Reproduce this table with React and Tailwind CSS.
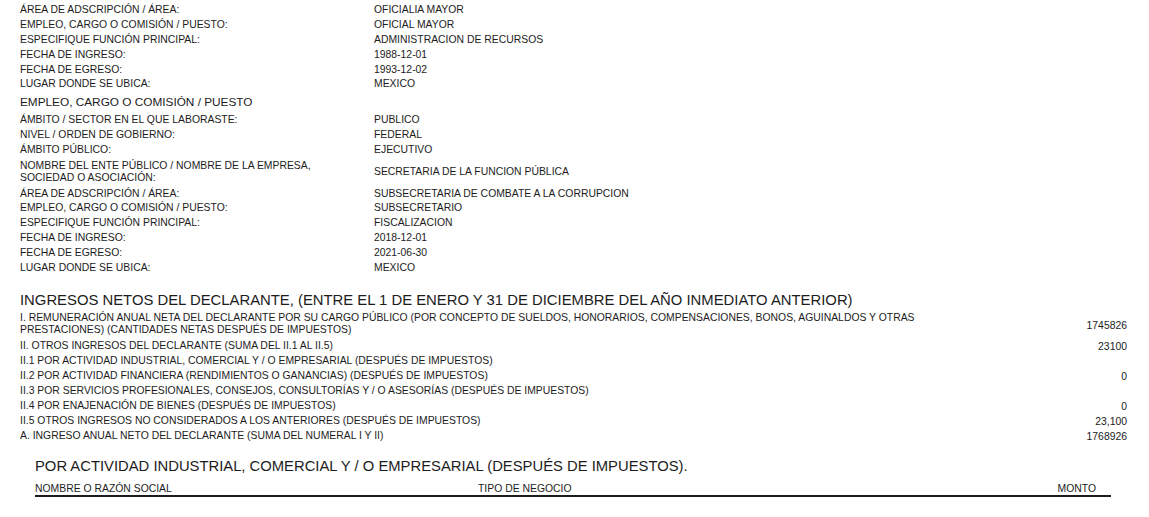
import React from "react";

const sec1 = [
  ["ÁREA DE ADSCRIPCIÓN / ÁREA:", "OFICIALIA MAYOR"],
  ["EMPLEO, CARGO O COMISIÓN / PUESTO:", "OFICIAL MAYOR"],
  ["ESPECIFIQUE FUNCIÓN PRINCIPAL:", "ADMINISTRACION DE RECURSOS"],
  ["FECHA DE INGRESO:", "1988-12-01"],
  ["FECHA DE EGRESO:", "1993-12-02"],
  ["LUGAR DONDE SE UBICA:", "MEXICO"],
];

const sec2a = [
  ["ÁMBITO / SECTOR EN EL QUE LABORASTE:", "PUBLICO"],
  ["NIVEL / ORDEN DE GOBIERNO:", "FEDERAL"],
  ["ÁMBITO PÚBLICO:", "EJECUTIVO"],
];
const sec2b = [
  ["ÁREA DE ADSCRIPCIÓN / ÁREA:", "SUBSECRETARIA DE COMBATE A LA CORRUPCION"],
  ["EMPLEO, CARGO O COMISIÓN / PUESTO:", "SUBSECRETARIO"],
  ["ESPECIFIQUE FUNCIÓN PRINCIPAL:", "FISCALIZACION"],
  ["FECHA DE INGRESO:", "2018-12-01"],
  ["FECHA DE EGRESO:", "2021-06-30"],
  ["LUGAR DONDE SE UBICA:", "MEXICO"],
];

const ingresos = [
  ["II. OTROS INGRESOS DEL DECLARANTE (SUMA DEL II.1 AL II.5)", "23100"],
  ["II.1 POR ACTIVIDAD INDUSTRIAL, COMERCIAL Y / O EMPRESARIAL (DESPUÉS DE IMPUESTOS)", ""],
  ["II.2 POR ACTIVIDAD FINANCIERA (RENDIMIENTOS O GANANCIAS) (DESPUÉS DE IMPUESTOS)", "0"],
  ["II.3 POR SERVICIOS PROFESIONALES, CONSEJOS, CONSULTORÍAS Y / O ASESORÍAS (DESPUÉS DE IMPUESTOS)", ""],
  ["II.4 POR ENAJENACIÓN DE BIENES (DESPUÉS DE IMPUESTOS)", "0"],
  ["II.5 OTROS INGRESOS NO CONSIDERADOS A LOS ANTERIORES (DESPUÉS DE IMPUESTOS)", "23,100"],
  ["A. INGRESO ANUAL NETO DEL DECLARANTE (SUMA DEL NUMERAL I Y II)", "1768926"],
];

function Row({ label, value }) {
  return (
    <div className="flex h-[14.8px] items-center">
      <div className="w-[354px] shrink-0">{label}</div>
      <div>{value}</div>
    </div>
  );
}

export default function App() {
  return (
    <div
      className="w-[1149px] h-[517px] overflow-hidden bg-white text-[#1c1c1c] text-[10.4px] leading-[12px]"
      style={{ fontFamily: '"Liberation Sans", Arial, sans-serif' }}
    >
      <div className="pl-[20px] pt-[3px]">
        {sec1.map(([l, v], i) => (
          <Row key={i} label={l} value={v} />
        ))}
        <div className="h-[21px] flex items-center text-[11.8px]">EMPLEO, CARGO O COMISIÓN / PUESTO</div>
        {sec2a.map(([l, v], i) => (
          <Row key={i} label={l} value={v} />
        ))}
        <div className="flex h-[29px] items-center">
          <div className="w-[354px] shrink-0">
            NOMBRE DEL ENTE PÚBLICO / NOMBRE DE LA EMPRESA,
            <br />
            SOCIEDAD O ASOCIACIÓN:
          </div>
          <div>SECRETARIA DE LA FUNCION PÚBLICA</div>
        </div>
        {sec2b.map(([l, v], i) => (
          <Row key={i} label={l} value={v} />
        ))}

        <div className="mt-[15px] h-[20px] flex items-center text-[14.85px]">
          INGRESOS NETOS DEL DECLARANTE, (ENTRE EL 1 DE ENERO Y 31 DE DICIEMBRE DEL AÑO INMEDIATO ANTERIOR)
        </div>
        <div className="w-[1107px]">
          <div className="flex h-[29px] items-center">
            <div className="w-[900px] shrink-0">
              I. REMUNERACIÓN ANUAL NETA DEL DECLARANTE POR SU CARGO PÚBLICO (POR CONCEPTO DE SUELDOS, HONORARIOS, COMPENSACIONES, BONOS, AGUINALDOS Y OTRAS PRESTACIONES) (CANTIDADES NETAS DESPUÉS DE IMPUESTOS)
            </div>
            <div className="flex-1 text-right pt-[3px]">1745826</div>
          </div>
          {ingresos.map(([l, v], i) => (
            <div key={i} className="flex h-[15px] items-center">
              <div className="flex-1">{l}</div>
              <div className="text-right pt-[2px]">{v}</div>
            </div>
          ))}
        </div>

        <div className="pl-[15px] w-[1091px]">
          <div className="mt-[12px] h-[21px] flex items-center text-[14.8px]">
            POR ACTIVIDAD INDUSTRIAL, COMERCIAL Y / O EMPRESARIAL (DESPUÉS DE IMPUESTOS).
          </div>
          <div className="flex h-[20px] items-end border-b-2 border-[#1c1c1c] text-[10.4px]">
            <div className="w-[443px]">NOMBRE O RAZÓN SOCIAL</div>
            <div className="flex-1">TIPO DE NEGOCIO</div>
            <div className="pr-[15px]">MONTO</div>
          </div>
        </div>
      </div>
    </div>
  );
}
